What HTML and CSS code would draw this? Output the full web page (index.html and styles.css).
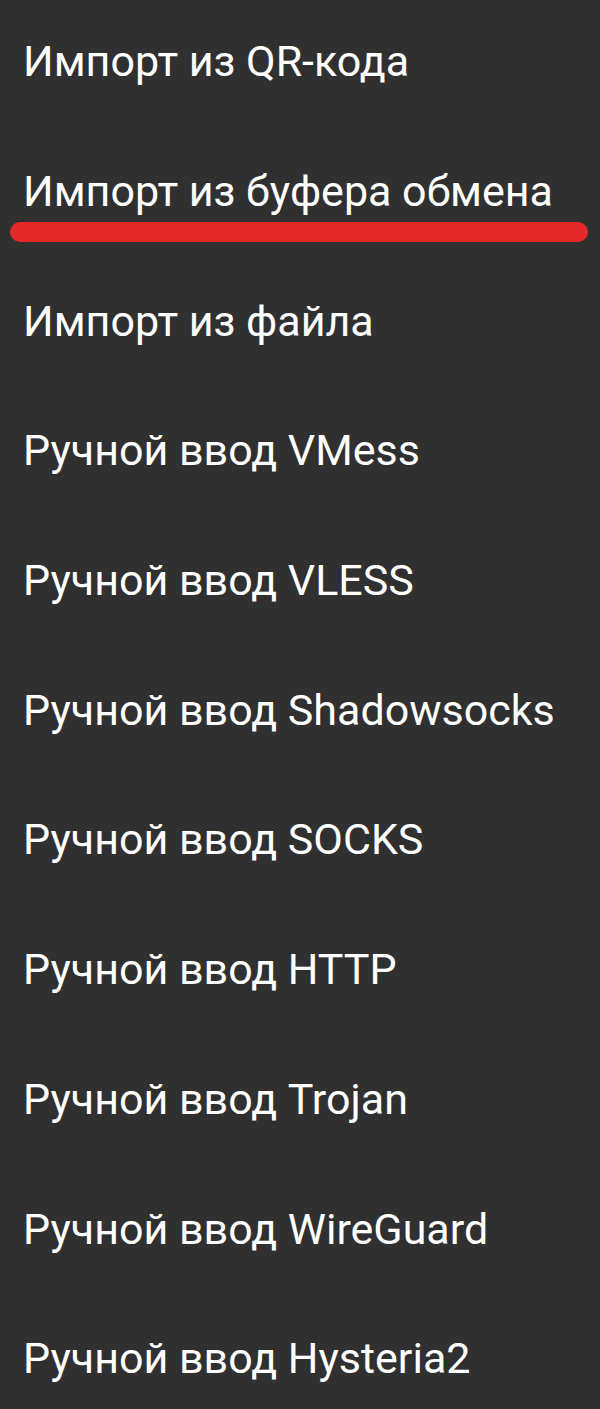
FILE: index.html
```html
<!DOCTYPE html>
<html lang="ru">
<head>
<meta charset="utf-8">
<link rel="stylesheet" href="styles.css">
</head>
<body>
<ul class="menu">
  <li class="item">Импорт из QR-кода</li>
  <li class="item item-marked">Импорт из буфера обмена<span class="mark"></span></li>
  <li class="item">Импорт из файла</li>
  <li class="item">Ручной ввод VMess</li>
  <li class="item">Ручной ввод VLESS</li>
  <li class="item">Ручной ввод Shadowsocks</li>
  <li class="item">Ручной ввод SOCKS</li>
  <li class="item">Ручной ввод HTTP</li>
  <li class="item">Ручной ввод Trojan</li>
  <li class="item">Ручной ввод WireGuard</li>
  <li class="item">Ручной ввод Hysteria2</li>
</ul>
</body>
</html>
```

FILE: styles.css
```css
html, body {
  margin: 0;
  padding: 0;
  background: #303030;
}
body {
  width: 600px;
  height: 1409px;
  overflow: hidden;
  font-family: Roboto, "Noto Sans", sans-serif;
}
.menu {
  list-style: none;
  margin: 0;
  padding: 0;
  display: flex;
  flex-direction: column;
}
.item {
  height: 129.7px;
  display: flex;
  align-items: center;
  padding: 0 0 7px 23px;
  box-sizing: border-box;
  color: #ffffff;
  font-size: 43px;
  line-height: 50px;
  white-space: nowrap;
}
.item-marked {
  position: relative;
}
.mark {
  position: absolute;
  left: 10px;
  top: 92.3px;
  width: 578px;
  height: 20px;
  border-radius: 10px;
  background: #e52828;
}
```
